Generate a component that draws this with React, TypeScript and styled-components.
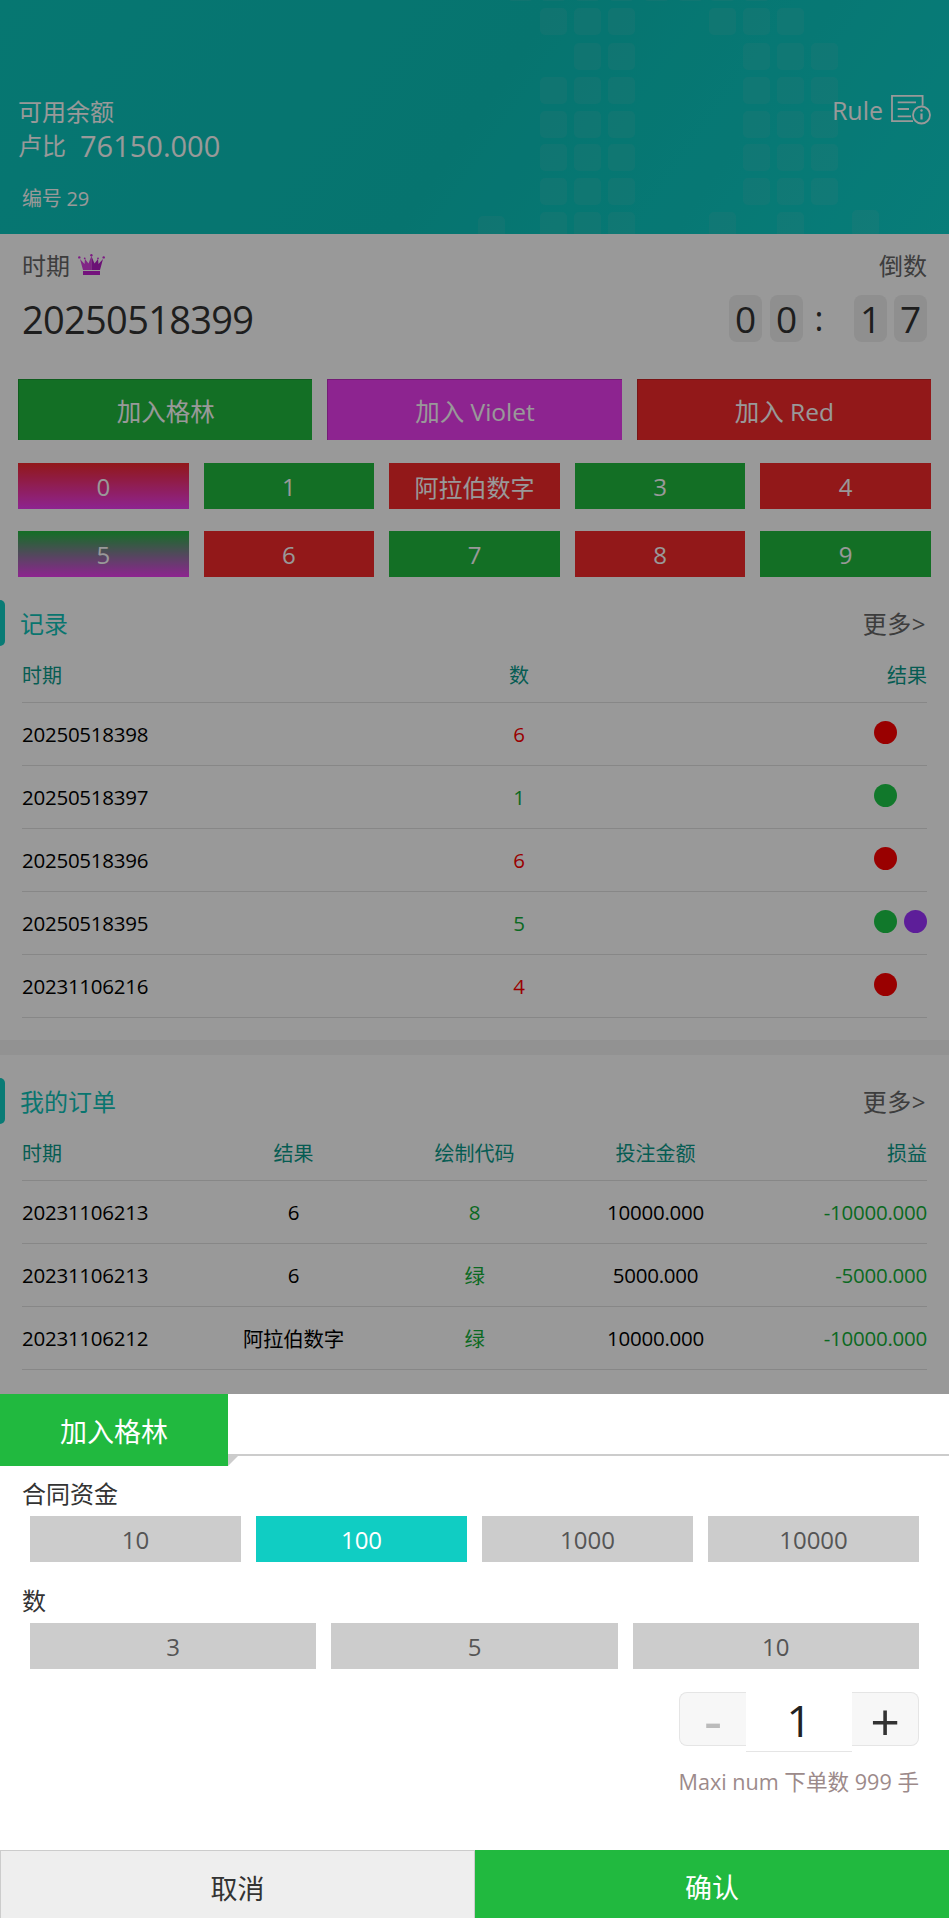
import React from "react";
import styled, { createGlobalStyle } from "styled-components";

const FONT = `"Open Sans", "Noto Sans CJK SC", sans-serif`;

const Global = createGlobalStyle`
  html, body { margin: 0; padding: 0; background: #fff; overflow: hidden; }
  * { box-sizing: border-box; }
  body { font-family: ${FONT}; }
`;

const Screen = styled.div`
  position: relative;
  width: 949px;
  height: 1918px;
  overflow: hidden;
  background: #fff;
`;

const Dim = styled.div`
  position: absolute;
  inset: 0;
  background: rgba(0, 0, 0, 0.4);
`;

/* header */
const Hero = styled.header`
  position: relative;
  height: 234px;
  padding: 95px 18px 0 18px;
  display: flex;
  justify-content: space-between;
  align-items: flex-start;
  overflow: hidden;
  color: #fff;
  background: linear-gradient(125deg, #0bc6bd 0%, #0ac2ba 50%, #0ed0ca 100%);
`;
const HeroPattern = styled.svg`
  position: absolute;
  left: 0;
  top: 0;
  width: 949px;
  height: 234px;
`;
const HeroBalance = styled.div`
  position: relative;
  display: flex;
  flex-direction: column;
`;
const HeroLabel = styled.div`
  font-size: 24px;
  line-height: 34px;
`;
const HeroAmount = styled.div`
  font-size: 24px;
  line-height: 33px;
  display: flex;
  align-items: center;
  gap: 14px;
`;
const AmountValue = styled.span`
  font-size: 29px;
`;
const HeroId = styled.div`
  font-size: 20px;
  line-height: 28px;
  margin: 23px 0 0 4px;
  letter-spacing: -0.2px;
`;
const RuleLink = styled.div`
  position: relative;
  display: flex;
  align-items: flex-start;
  gap: 8px;
  font-size: 25px;
  line-height: 30px;
`;

/* round info */
const Info = styled.section`
  padding: 16px 22px 0 22px;
`;
const InfoTop = styled.div`
  display: flex;
  justify-content: space-between;
  align-items: center;
  height: 28px;
  font-size: 24px;
  color: #666;
`;
const InfoPeriod = styled.span`
  display: flex;
  align-items: center;
  gap: 8px;
`;
const InfoBottom = styled.div`
  display: flex;
  justify-content: space-between;
  align-items: center;
  margin-top: 17px;
  height: 47px;
`;
const RoundNumber = styled.div`
  font-size: 38px;
  letter-spacing: -0.7px;
  color: #333;
`;
const Timer = styled.div`
  display: flex;
  align-items: center;
`;
const TimerDigit = styled.span<{ $gap?: number }>`
  width: 33px;
  height: 47px;
  margin-left: ${(p) => p.$gap || 0}px;
  border-radius: 8px;
  background: #eee;
  color: #333;
  font-size: 37px;
  line-height: 47px;
  text-align: center;
`;
const TimerColon = styled.span`
  width: 51px;
  padding-right: 19px;
  text-align: center;
  color: #333;
  font-size: 34px;
  line-height: 47px;
`;

/* betting colours */
const green = "#21b93f";
const violet = "#ec3cf0";
const red = "#f3282b";

const JoinRow = styled.div`
  display: grid;
  grid-template-columns: repeat(3, 1fr);
  gap: 15px;
  margin: 37px 18px 0;
`;
const JoinButton = styled.div<{ $bg: string; $edge: string }>`
  height: 61px;
  display: flex;
  align-items: center;
  justify-content: center;
  background: ${(p) => p.$bg};
  border-top: 1px solid ${(p) => p.$edge};
  border-left: 1px solid ${(p) => p.$edge};
  color: #fff;
  font-size: 24.500px;
`;
const NumberGrid = styled.div`
  display: grid;
  grid-template-columns: repeat(5, 1fr);
  column-gap: 15px;
  row-gap: 22px;
  margin: 23px 18px 0;
`;
const NumberCell = styled.div<{ $bg: string }>`
  height: 46px;
  display: flex;
  align-items: center;
  justify-content: center;
  background: ${(p) => p.$bg};
  color: #fff;
  font-size: 24px;
`;

/* tables */
const Section = styled.section<{ $top: number; $bottom: number }>`
  padding: ${(p) => p.$top}px 22px ${(p) => p.$bottom}px 22px;
`;
const SectionHead = styled.div`
  position: relative;
  height: 46px;
  padding-bottom: 2px;
  display: flex;
  align-items: center;
  justify-content: space-between;
  font-size: 24px;
`;
const SectionBar = styled.i`
  position: absolute;
  left: -22px;
  top: 0;
  width: 5px;
  height: 46px;
  border-radius: 0 5px 5px 0;
  background: #10cdc3;
`;
const SectionTitle = styled.span`
  color: #10c4ba;
  margin-left: -2px;
`;
const More = styled.span`
  color: #666;
  margin-right: 1px;
  letter-spacing: 0.5px;
`;
const TableBody = styled.div`
  margin-right: 0;
`;
const TableRow = styled.div<{ $cols: string; $head?: boolean }>`
  display: grid;
  grid-template-columns: ${(p) => p.$cols};
  align-items: center;
  height: ${(p) => (p.$head ? 57 : 63)}px;
  border-bottom: 1px solid #e2e2e2;
  font-size: ${(p) => (p.$head ? 20 : 20.5)}px;
  letter-spacing: ${(p) => (p.$head ? 0 : -0.25)}px;
  color: ${(p) => (p.$head ? "#0a9a8a" : "#000")};
`;
const Cell = styled.div<{ $align?: string; $color?: string }>`
  text-align: ${(p) => p.$align || "left"};
  ${(p) => (p.$color ? `color: ${p.$color};` : "")}
`;
const Dots = styled.div`
  justify-self: end;
  width: 53px;
  display: flex;
  gap: 7px;
  margin-top: -4px;
`;
const Dot = styled.i<{ $c: string }>`
  width: 23px;
  height: 23px;
  border-radius: 50%;
  background: ${(p) => p.$c};
`;
const Band = styled.div`
  height: 15px;
  background: #f4f4f4;
`;

/* bottom sheet */
const Sheet = styled.div`
  position: absolute;
  left: 0;
  right: 0;
  bottom: 0;
  height: 524px;
  background: #fff;
  display: flex;
  flex-direction: column;
`;
const SheetTabRow = styled.div`
  position: relative;
  height: 72px;
`;
const SheetRule = styled.div`
  position: absolute;
  left: 228px;
  right: 0;
  top: 60px;
  height: 2px;
  background: #ccc;
`;
const SheetTab = styled.div`
  position: relative;
  width: 228px;
  height: 72px;
  display: flex;
  align-items: center;
  justify-content: center;
  background: ${green};
  color: #fff;
  font-size: 27px;
`;
const SheetFold = styled.svg`
  position: absolute;
  left: 228px;
  top: 60px;
  width: 12px;
  height: 12px;
`;
const SheetBody = styled.div`
  flex: 1;
  padding: 13px 30px 0 30px;
`;
const FieldLabel = styled.div<{ $gap: number }>`
  margin: ${(p) => p.$gap}px 0 0 -8px;
  font-size: 24px;
  line-height: 30px;
  height: 30px;
  color: #333;
`;
const OptionRow = styled.div<{ $n: number }>`
  display: grid;
  grid-template-columns: repeat(${(p) => p.$n}, 1fr);
  gap: 15px;
  margin-top: 7px;
`;
const Option = styled.div<{ $on?: boolean }>`
  height: 46px;
  display: flex;
  align-items: center;
  justify-content: center;
  background: ${(p) => (p.$on ? "#10cdc3" : "#ccc")};
  color: ${(p) => (p.$on ? "#fff" : "#555")};
  font-size: 24px;
`;
const StepperRow = styled.div`
  display: flex;
  justify-content: flex-end;
  margin-top: 23px;
  height: 60px;
`;
const StepButton = styled.div<{ $side: "l" | "r"; $muted?: boolean }>`
  width: 67px;
  height: 54px;
  padding-top: 6px;
  display: flex;
  align-items: center;
  justify-content: center;
  background: #f7f7f7;
  border: 1px solid #e5e5e5;
  border-${(p) => (p.$side === "l" ? "right" : "left")}: none;
  border-radius: ${(p) => (p.$side === "l" ? "8px 0 0 8px" : "0 8px 8px 0")};
  color: ${(p) => (p.$muted ? "#bbb" : "#333")};
  font-family: "Liberation Sans", sans-serif;
  font-size: ${(p) => (p.$muted ? 56 : 50)}px;
  line-height: 1;
`;
const StepValue = styled.div`
  width: 106px;
  height: 60px;
  padding-bottom: 4px;
  display: flex;
  align-items: center;
  justify-content: center;
  background: #fff;
  border-bottom: 1px solid #e5e5e5;
  color: #222;
  font-size: 44px;
  line-height: 1;
`;
const Limit = styled.div`
  margin-top: 15px;
  text-align: right;
  font-size: 21.600px;
  line-height: 30px;
  color: #9c8a8a;
`;
const SheetFooter = styled.div`
  height: 68px;
  display: grid;
  grid-template-columns: 475px 1fr;
`;
const CancelButton = styled.div`
  display: flex;
  align-items: center;
  justify-content: center;
  background: #eee;
  border: 1px solid #ccc;
  border-bottom: none;
  color: #333;
  font-size: 27px;
  padding-top: 5px;
`;
const ConfirmButton = styled.div`
  display: flex;
  align-items: center;
  justify-content: center;
  background: ${green};
  color: #fff;
  font-size: 27px;
  padding-top: 5px;
`;

const squares: [number, number][] = [];
const rows = [8, 43, 77, 111, 144, 178, 212];
[540, 574, 608].forEach((x) =>
  rows.forEach((y, i) => {
    if (!(x === 540 && i === 1)) squares.push([x, y]);
  })
);
[743, 777].forEach((x) => rows.forEach((y, i) => { if (!(x === 743 && i === 6)) squares.push([x, y]); }));
[8, 212].forEach((y) => squares.push([709, y]));
[43, 77, 111, 144, 178].forEach((y) => squares.push([811, y]));
squares.push([852, 210], [478, 216]);
[507, 540, 574, 608, 643, 677, 709, 743].forEach((x) => squares.push([x, -26]));

const HeroBlocks = () => (
  <HeroPattern viewBox="0 0 949 234">
    {squares.map(([x, y], i) => (
      <rect key={i} x={x} y={y} width="27" height="27" rx="5" fill="#ccc" fillOpacity="0.09" />
    ))}
  </HeroPattern>
);

const RuleIcon = () => (
  <svg width="40" height="30" viewBox="0 0 40 30" fill="none" stroke="#fff" strokeWidth="1.8">
    <path d="M22 26.2H1V.8h30.6v10" />
    <path d="M6.7 7.3H25M6.7 14H18M6.7 21.3H20" />
    <circle cx="30.5" cy="20" r="8.500" />
    <path d="M30.500 18.500v6" strokeWidth="2.200" />
    <circle cx="30.500" cy="15.500" r="1.200" fill="#fff" stroke="none" />
  </svg>
);

const Crown = () => (
  <svg width="27" height="21" viewBox="0 0 27 21">
    <path d="M2 5l4.5 5L7 5l3.5 4.5L13.4 2v14H5z" fill="#d83fe0" />
    <path d="M25 5l-4.500 5L20 5l-3.500 4.500L13.400 2v14H22z" fill="#b31dc4" />
    <circle cx="1.300" cy="3.400" r="1.200" fill="#d12edb" />
    <circle cx="6.700" cy="4.400" r="0.900" fill="#d12edb" />
    <circle cx="13.400" cy="1.200" r="1.200" fill="#d12edb" />
    <circle cx="20" cy="4.400" r="0.900" fill="#d12edb" />
    <circle cx="25.700" cy="3.400" r="1.200" fill="#d12edb" />
    <rect x="5" y="17" width="17" height="4" fill="#c21fd0" />
  </svg>
);

const numbers: { t: string; bg: string }[] = [
  { t: "0", bg: `linear-gradient(180deg, ${red}, ${violet})` },
  { t: "1", bg: green },
  { t: "阿拉伯数字", bg: red },
  { t: "3", bg: green },
  { t: "4", bg: red },
  { t: "5", bg: `linear-gradient(180deg, ${green}, ${violet})` },
  { t: "6", bg: red },
  { t: "7", bg: green },
  { t: "8", bg: red },
  { t: "9", bg: green },
];

const RED = "#ff0000";
const GRN = "#1dc948";
const TXT_GRN = "#12b038";
const PUR = "#9c32ff";
const records = [
  { id: "20250518398", n: "6", c: RED, dots: [RED] },
  { id: "20250518397", n: "1", c: TXT_GRN, dots: [GRN] },
  { id: "20250518396", n: "6", c: RED, dots: [RED] },
  { id: "20250518395", n: "5", c: TXT_GRN, dots: [GRN, PUR] },
  { id: "20231106216", n: "4", c: RED, dots: [RED] },
];
const orders = [
  ["20231106213", "6", "8", "10000.000", "-10000.000"],
  ["20231106213", "6", "绿", "5000.000", "-5000.000"],
  ["20231106212", "阿拉伯数字", "绿", "10000.000", "-10000.000"],
];

const RECORD_COLS = "447px 100px 1fr";
const ORDER_COLS = "repeat(5, 1fr)";

export default function App() {
  return (
    <Screen>
      <Global />
      <Hero>
        <HeroBlocks />
        <HeroBalance>
          <HeroLabel>可用余额</HeroLabel>
          <HeroAmount>
            卢比<AmountValue>76150.000</AmountValue>
          </HeroAmount>
          <HeroId>编号 29</HeroId>
        </HeroBalance>
        <RuleLink>
          Rule
          <RuleIcon />
        </RuleLink>
      </Hero>
      <Info>
        <InfoTop>
          <InfoPeriod>
            时期
            <Crown />
          </InfoPeriod>
          <span>倒数</span>
        </InfoTop>
        <InfoBottom>
          <RoundNumber>20250518399</RoundNumber>
          <Timer>
            <TimerDigit>0</TimerDigit>
            <TimerDigit $gap={8}>0</TimerDigit>
            <TimerColon>:</TimerColon>
            <TimerDigit>1</TimerDigit>
            <TimerDigit $gap={7}>7</TimerDigit>
          </Timer>
        </InfoBottom>
      </Info>
      <JoinRow>
        <JoinButton $bg={green} $edge="#1a9a33">加入格林</JoinButton>
        <JoinButton $bg={violet} $edge="#c030c4">加入 Violet</JoinButton>
        <JoinButton $bg={red} $edge="#c92224">加入 Red</JoinButton>
      </JoinRow>
      <NumberGrid>
        {numbers.map((n) => (
          <NumberCell key={n.t} $bg={n.bg}>{n.t}</NumberCell>
        ))}
      </NumberGrid>
      <Section $top={23} $bottom={22}>
        <SectionHead>
          <SectionBar />
          <SectionTitle>记录</SectionTitle>
          <More>更多&gt;</More>
        </SectionHead>
        <TableBody>
          <TableRow $cols={RECORD_COLS} $head>
            <Cell>时期</Cell>
            <Cell $align="center">数</Cell>
            <Cell $align="right">结果</Cell>
          </TableRow>
          {records.map((r) => (
            <TableRow key={r.id} $cols={RECORD_COLS}>
              <Cell>{r.id}</Cell>
              <Cell $align="center" $color={r.c}>{r.n}</Cell>
              <Dots>
                {r.dots.map((d) => (
                  <Dot key={d} $c={d} />
                ))}
              </Dots>
            </TableRow>
          ))}
        </TableBody>
      </Section>
      <Band />
      <Section $top={23} $bottom={0}>
        <SectionHead>
          <SectionBar />
          <SectionTitle>我的订单</SectionTitle>
          <More>更多&gt;</More>
        </SectionHead>
        <TableBody>
          <TableRow $cols={ORDER_COLS} $head>
            <Cell>时期</Cell>
            <Cell $align="center">结果</Cell>
            <Cell $align="center">绘制代码</Cell>
            <Cell $align="center">投注金额</Cell>
            <Cell $align="right">损益</Cell>
          </TableRow>
          {orders.map((o, i) => (
            <TableRow key={i} $cols={ORDER_COLS}>
              <Cell>{o[0]}</Cell>
              <Cell $align="center">{o[1]}</Cell>
              <Cell $align="center" $color={TXT_GRN}>{o[2]}</Cell>
              <Cell $align="center">{o[3]}</Cell>
              <Cell $align="right" $color={TXT_GRN}>{o[4]}</Cell>
            </TableRow>
          ))}
        </TableBody>
      </Section>
      <Dim />
      <Sheet>
        <SheetTabRow>
          <SheetRule />
          <SheetTab>加入格林</SheetTab>
          <SheetFold viewBox="0 0 12 12">
            <path d="M0 0h12L0 12z" fill="#ccc" />
          </SheetFold>
        </SheetTabRow>
        <SheetBody>
          <FieldLabel $gap={0}>合同资金</FieldLabel>
          <OptionRow $n={4}>
            <Option>10</Option>
            <Option $on>100</Option>
            <Option>1000</Option>
            <Option>10000</Option>
          </OptionRow>
          <FieldLabel $gap={24}>数</FieldLabel>
          <OptionRow $n={3}>
            <Option>3</Option>
            <Option>5</Option>
            <Option>10</Option>
          </OptionRow>
          <StepperRow>
            <StepButton $side="l" $muted>-</StepButton>
            <StepValue>1</StepValue>
            <StepButton $side="r">+</StepButton>
          </StepperRow>
          <Limit>Maxi num 下单数 999 手</Limit>
        </SheetBody>
        <SheetFooter>
          <CancelButton>取消</CancelButton>
          <ConfirmButton>确认</ConfirmButton>
        </SheetFooter>
      </Sheet>
    </Screen>
  );
}
